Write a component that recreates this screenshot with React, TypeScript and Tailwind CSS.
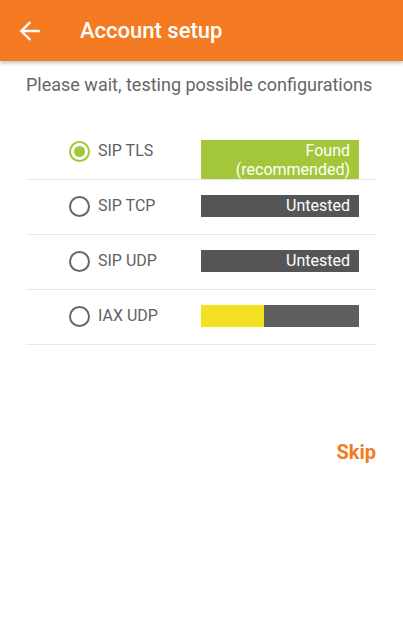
import React from "react";

type Row = { label: string; selected?: boolean; kind: "found" | "untested" | "progress" };

const rows: Row[] = [
  { label: "SIP TLS", selected: true, kind: "found" },
  { label: "SIP TCP", kind: "untested" },
  { label: "SIP UDP", kind: "untested" },
  { label: "IAX UDP", kind: "progress" },
];

function Radio({ selected }: { selected?: boolean }) {
  return (
    <div
      className={`w-[21px] h-[21px] shrink-0 rounded-full border-[2px] flex items-center justify-center ${
        selected ? "border-[#a4c639]" : "border-[#666666]"
      }`}
    >
      {selected && <div className="w-[11px] h-[11px] rounded-full bg-[#a4c639]" />}
    </div>
  );
}

function Bar({ kind }: { kind: Row["kind"] }) {
  if (kind === "found") {
    return (
      <div className="w-[158px] h-[39px] bg-[#a4c639] text-white text-right pr-[9px] text-[16px] leading-[19px] pt-[1px]">
        <div>Found</div>
        <div>(recommended)</div>
      </div>
    );
  }
  if (kind === "untested") {
    return (
      <div className="w-[158px] h-[22px] bg-[#555555] text-white text-right pr-[9px] text-[16px] leading-[22px]">
        Untested
      </div>
    );
  }
  return (
    <div className="w-[158px] h-[22px] bg-[#5e5e5e] flex">
      <div className="w-[63px] h-full bg-[#f3e021]" />
    </div>
  );
}

export default function App() {
  return (
    <div className="w-[403px] h-[631px] bg-white relative overflow-hidden" style={{ fontFamily: "Roboto, 'Noto Sans', sans-serif" }}>
      <div className="h-[61px] bg-[#f47b22] flex items-center shadow-[0_2px_4px_rgba(0,0,0,0.25)] relative z-10">
        <div className="w-[80px] flex items-center pl-[17px]">
          <svg width="26" height="26" viewBox="0 0 24 24" fill="none">
            <path d="M20 12H4.5M11.5 4.5L4 12l7.5 7.5" stroke="white" strokeWidth="2.2" strokeLinecap="square" />
          </svg>
        </div>
        <div className="text-white text-[22px] font-medium">Account setup</div>
      </div>
      <div className="px-[26px]">
        <div className="text-[#666666] text-[18px] pt-[12px] leading-[24px] whitespace-nowrap">
          Please wait, testing possible configurations
        </div>
        <div className="mt-[28px] w-[350px]">
          {rows.map((r) => (
            <div key={r.label} className="h-[55px] border-b border-[#e8e8e8] flex items-start pt-[15px]">
              <div className="w-[175px] flex items-center h-[22px] pl-[43px]">
                <Radio selected={r.selected} />
                <span className="ml-[8px] text-[#5f5f5f] text-[16px]">{r.label}</span>
              </div>
              <Bar kind={r.kind} />
            </div>
          ))}
        </div>
        <div className="flex justify-end mt-[93px] pr-[1px]">
          <span className="text-[#f47b22] font-bold text-[20px] leading-[28px]">Skip</span>
        </div>
      </div>
    </div>
  );
}
